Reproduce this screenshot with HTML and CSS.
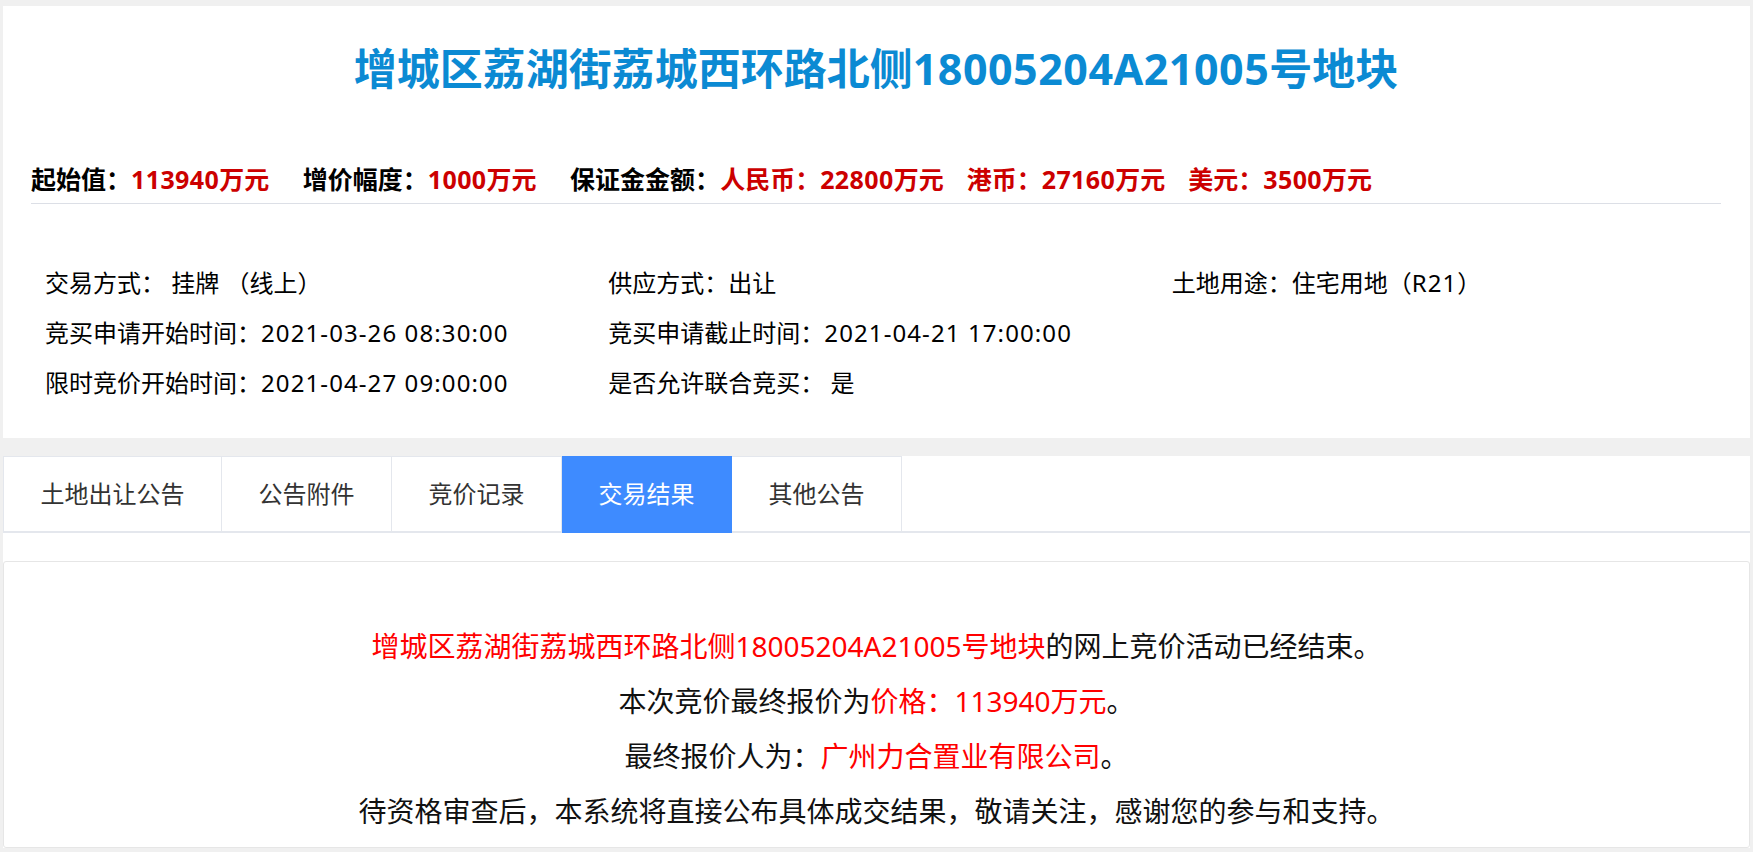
FILE: index.html
```html
<!DOCTYPE html>
<html lang="zh-CN">
<head>
<meta charset="utf-8">
<title>增城区荔湖街荔城西环路北侧18005204A21005号地块</title>
<link rel="stylesheet" href="styles.css">
</head>
<body>
<div class="page">
  <section class="summary">
    <h1 class="title">增城区荔湖街荔城西环路北侧<span class="num">18005204A21005</span>号地块</h1>
    <div class="prices">
      <span class="item">起始值：<span class="val"><span class="num">113940</span>万元</span></span>
      <span class="item">增价幅度：<span class="val"><span class="num">1000</span>万元</span></span>
      <span class="item">保证金金额：<span class="val">人民币：<span class="num">22800</span>万元</span><span class="val cur">港币：<span class="num">27160</span>万元</span><span class="val cur">美元：<span class="num">3500</span>万元</span></span>
    </div>
    <div class="info">
      <div class="cell">交易方式： 挂牌 （线上）</div>
      <div class="cell">供应方式：出让</div>
      <div class="cell">土地用途：住宅用地（<span class="num">R21</span>）</div>
      <div class="cell">竞买申请开始时间：<span class="num">2021-03-26 08:30:00</span></div>
      <div class="cell">竞买申请截止时间：<span class="num">2021-04-21 17:00:00</span></div>
      <div class="cell"></div>
      <div class="cell">限时竞价开始时间：<span class="num">2021-04-27 09:00:00</span></div>
      <div class="cell">是否允许联合竞买： 是</div>
    </div>
  </section>
  <section class="detail">
    <nav class="tabs">
      <div class="tab">土地出让公告</div>
      <div class="tab">公告附件</div>
      <div class="tab">竞价记录</div>
      <div class="tab active">交易结果</div>
      <div class="tab">其他公告</div>
    </nav>
    <div class="result">
      <p><span class="red">增城区荔湖街荔城西环路北侧18005204A21005号地块</span>的网上竞价活动已经结束。</p>
      <p>本次竞价最终报价为<span class="red">价格：113940万元</span>。</p>
      <p>最终报价人为：<span class="red">广州力合置业有限公司</span>。</p>
      <p>待资格审查后，本系统将直接公布具体成交结果，敬请关注，感谢您的参与和支持。</p>
    </div>
  </section>
</div>
</body>
</html>
```
FILE: styles.css
```css
* { box-sizing: border-box; }
html, body { margin: 0; }
body {
  background: #f0f0f0;
  font-family: "Noto Sans", "Noto Sans CJK SC", sans-serif;
  color: #000;
}
.page { padding: 6px 3px 0 3px; }

.summary {
  background: #fff;
  padding: 0 29px 30px 28px;
}
.title {
  margin: 0;
  padding-top: 33px;
  height: 93px;
  line-height: 60px;
  font-size: 43px;
  font-weight: 700;
  color: #0b8ad3;
  text-align: center;
  white-space: nowrap;
}
.title .num { letter-spacing: 0.5px; }
.prices {
  margin-top: 62px;
  height: 43px;
  line-height: 36px;
  font-size: 25px;
  font-weight: 700;
  padding-bottom: 6px;
  border-bottom: 1px solid #dcdfe6;
  white-space: nowrap;
}
.prices .item { margin-right: 27px; }
.prices .num { letter-spacing: 0.4px; }
.val { color: #cc0000; }
.cur { margin-left: 23px; }

.info {
  display: grid;
  grid-template-columns: repeat(3, 1fr);
  grid-auto-rows: 50px;
  margin-top: 54px;
  font-size: 24px;
  line-height: 50px;
}
.info .cell { padding-left: 14px; white-space: nowrap; }
.info .num { letter-spacing: 1.1px; }

.detail {
  margin-top: 18px;
  background: #fff;
}
.tabs {
  display: flex;
  height: 77px;
  border-bottom: 2px solid #e4e7ed;
}
.tab {
  height: 75px;
  line-height: 73px;
  padding: 0 36.5px;
  border-top: 1px solid #e4e7ed;
  border-right: 1px solid #e4e7ed;
  font-size: 24px;
  color: #333;
  white-space: nowrap;
}
.tab:first-child { border-left: 1px solid #e4e7ed; }
.tab.active {
  height: 77px;
  background: #3e8bff;
  border-color: #3e8bff;
  color: #fff;
}

.result {
  margin-top: 28px;
  border: 1px solid #e6e6e6;
  border-radius: 3px;
  padding: 57px 20px 8px;
  text-align: center;
  font-size: 28px;
  line-height: 55px;
  color: #111;
}
.result p { margin: 0; white-space: nowrap; }
.red { color: #ff0000; }
```
